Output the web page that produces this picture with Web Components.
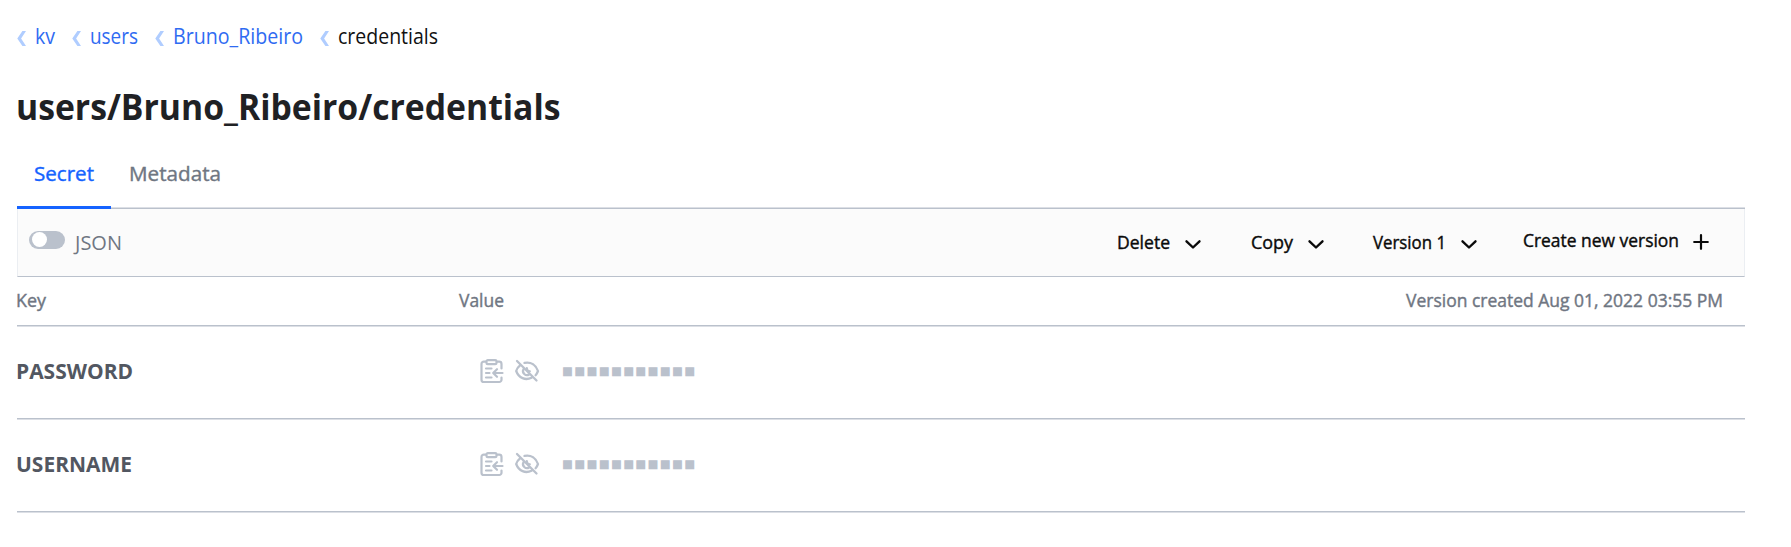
<!DOCTYPE html>
<html lang="en">
<head>
<meta charset="utf-8">
<title>users/Bruno_Ribeiro/credentials</title>
<style>
body{margin:0;background:#fff;font-family:"Open Sans","Noto Sans",sans-serif;overflow:hidden}
</style>
</head>
<body>
<secret-page></secret-page>
<script>
const define=(name,html,ready)=>customElements.define(name,class extends HTMLElement{
  constructor(){super();this.attachShadow({mode:'open'})}
  connectedCallback(){
    this.shadowRoot.innerHTML=html(this);
    if(ready)ready(this);
  }
});

// Label set to a fixed measure: w = width in px, s = font size, b = weight
define('ui-label',el=>`<style>
:host{display:inline-block;flex:none;white-space:nowrap;width:${el.getAttribute('w')}px;font-size:${el.getAttribute('s')}px;font-weight:${el.getAttribute('b')||400};line-height:1.4}
:host([b="500"]){-webkit-text-stroke:.4px currentColor}
span{display:inline-block;transform-origin:0 50%}
</style><span><slot></slot></span>`,el=>{
  const s=el.shadowRoot.querySelector('span');
  const n=s.getBoundingClientRect().width;
  if(n)s.style.transform=`scaleX(${el.getAttribute('w')/n})`;
});

const icons={
  back:['9','15','0 0 9 15','<path d="M5.400 0H9L4.100 7.500 9 15H5.400L.3 7.500z" fill="currentColor"/>'],
  down:['16','9','0 0 16 9','<path d="M1.5 1.3 8 7.5l6.5-6.2" fill="none" stroke="currentColor" stroke-width="2.4" stroke-linecap="round" stroke-linejoin="round"/>'],
  plus:['16','16','0 0 16 16','<path d="M8 1.2v13.6M1.2 8h13.6" fill="none" stroke="currentColor" stroke-width="2.200" stroke-linecap="round"/>'],
  clip:['24','24','0 0 24 24','<g fill="none" stroke="currentColor" stroke-width="2.200" stroke-linecap="round" stroke-linejoin="round"><path d="M6 2.6H3.8A2.3 2.3 0 0 0 1.5 4.9v15.8A2.3 2.3 0 0 0 3.8 23h15.4a2.3 2.3 0 0 0 2.3-2.3v-2.2M17 2.6h2.2a2.3 2.3 0 0 1 2.3 2.3v4.6"/><rect x="6.5" y="1.200" width="10" height="4" rx="1.3"/><path d="M6 9.5h5.5M6 14h3.5M6 18.5h5.5M22.5 14h-9M17 10.2 13.2 14l3.8 3.8"/></g>'],
  eye:['24','22','0 0 24 22','<g fill="none" stroke="currentColor" stroke-width="2.300" stroke-linecap="round" stroke-linejoin="round"><path d="M2 1 21.500 20.500M9.500 2.900C16 1.500 21 5 23 11c-.6 1.700-1.300 3-2.400 4.200M4.800 5.600C3 7 1.700 9 1.200 11c2.500 7 9.300 9.800 15.300 6.700"/><path d="M8.500 9.200a4 4 0 0 0 5.600 5.300M11.800 8.200c0 2 .9 3 3 3.100"/></g>']
};
define('ui-icon',el=>{
  const [w,h,v,p]=icons[el.getAttribute('name')];
  return `<style>:host{display:block;flex:none;width:${w}px;height:${h}px}svg{display:block;overflow:visible}</style><svg width="${w}" height="${h}" viewBox="${v}">${p}</svg>`;
});

define('crumb-item',()=>`<style>
:host{display:flex;align-items:center;color:#2f6bf2}
:host([current]){color:#111}
ui-icon{color:#b0cdff;margin:4px 9px 0 0}
</style><ui-icon name="back"></ui-icon><slot></slot>`);

define('crumb-bar',()=>`<style>
:host{display:flex;box-sizing:border-box;height:72px;padding:1px 0 0 17px;align-items:center}
</style><slot></slot>`);

define('tab-item',()=>`<style>
:host{display:flex;box-sizing:border-box;height:69px;padding:0 17px;align-items:center;color:#6f7682;border-bottom:3px solid transparent}
:host([active]){color:#1563ff;border-color:#1563ff}
</style><slot></slot>`);

define('tab-bar',()=>`<style>
:host{display:flex;box-sizing:border-box;height:69px;background:linear-gradient(#dcdfe5,#dcdfe5) 0 67px/100% 1px no-repeat,linear-gradient(#bac1cc,#bac1cc) 0 68px/100% 1px no-repeat}
</style><slot></slot>`);

define('toggle-switch',()=>`<style>
:host{display:flex;align-items:center}
i{display:block;box-sizing:border-box;width:36px;height:18px;border-radius:9px;background:#bac1cc;padding:1px 3px;margin:-5px 9px 0 0}
i::before{content:"";display:block;width:15px;height:15px;border-radius:50%;background:#fff}
</style><i></i><slot></slot>`);

define('tool-action',el=>`<style>
:host{display:flex;align-items:center;color:#0a0a0a}
ui-icon{margin:${el.getAttribute('icon')==='plus'?'-1px 0 0 14px':'3px 0 0 15px'}}
</style><slot></slot><ui-icon name="${el.getAttribute('icon')}"></ui-icon>`);

define('tool-bar',()=>`<style>
:host{display:flex;box-sizing:border-box;height:68px;border:solid #ebeef2;border-width:0 1px 1px;border-bottom-color:#bac1cc;background:#fbfbfb;align-items:center;padding:0 35px 0 11px}
.actions{display:flex;align-items:center;margin-left:auto}
</style><slot></slot><div class="actions"><slot name="actions"></slot></div>`);

define('table-head',()=>`<style>
:host{display:grid;grid-template-columns:442px 1fr auto;align-items:center;box-sizing:border-box;height:49px;padding:0 22px 2px 0;border-bottom:1px solid #bac1cc;box-shadow:0 1px #dcdfe5;color:#6f7682}
</style><slot></slot>`);

define('secret-row',el=>`<style>
:host{display:grid;grid-template-columns:463px 1fr;align-items:center;box-sizing:border-box;height:93px;padding-bottom:2px;border-bottom:1px solid #bac1cc;box-shadow:0 1px #dcdfe5;color:#525761}
.value{display:flex;align-items:center;color:#bac1cc}
.eye{margin:0 23px 0 11px}
.mask{font-family:"DejaVu Sans",sans-serif;letter-spacing:1.3px}
</style><slot></slot><div class="value"><ui-icon name="clip"></ui-icon><ui-icon class="eye" name="eye"></ui-icon><ui-label class="mask" w="134.500" s="11.600">■■■■■■■■■■■</ui-label></div>`);

define('secret-page',()=>`<style>
:host{display:block;height:547px}
h1{display:flex;align-items:center;height:66px;margin:0;padding:2px 0 0 16px;color:#1f2124;font-size:inherit}
main{margin:0 46px 0 17px}
</style>
<crumb-bar>
<crumb-item><ui-label w="20" s="21">kv</ui-label></crumb-item>
<crumb-item style="margin-left:17px"><ui-label w="48" s="21">users</ui-label></crumb-item>
<crumb-item style="margin-left:17px"><ui-label w="130" s="21">Bruno_Ribeiro</ui-label></crumb-item>
<crumb-item current style="margin-left:17px"><ui-label w="100" s="21">credentials</ui-label></crumb-item>
</crumb-bar>
<h1><ui-label w="544.500" s="35.500" b="700">users/Bruno_Ribeiro/credentials</ui-label></h1>
<main>
<tab-bar>
<tab-item active><ui-label w="60" s="20.500" b="500">Secret</ui-label></tab-item>
<tab-item><ui-label w="92" s="20.500" b="500" style="margin-left:1px">Metadata</ui-label></tab-item>
</tab-bar>
<tool-bar>
<toggle-switch><ui-label w="47" s="19.200" style="color:#6f7682;margin:2px 0 0 1px">JSON</ui-label></toggle-switch>
<tool-action slot="actions" icon="down"><ui-label w="53" s="17.800" b="500">Delete</ui-label></tool-action>
<tool-action slot="actions" icon="down" style="margin-left:50px"><ui-label w="42" s="17.800" b="500">Copy</ui-label></tool-action>
<tool-action slot="actions" icon="down" style="margin-left:49px"><ui-label w="73" s="17.800" b="500">Version 1</ui-label></tool-action>
<tool-action slot="actions" icon="plus" style="margin-left:46px"><ui-label w="156" s="17.800" b="500" style="margin-top:-4px">Create new version</ui-label></tool-action>
</tool-bar>
<table-head>
<ui-label w="30" s="17.800" b="500" style="margin-left:-1px">Key</ui-label>
<ui-label w="45" s="17.800" b="500">Value</ui-label>
<ui-label w="317" s="17.800" b="500">Version created Aug 01, 2022 03:55 PM</ui-label>
</table-head>
<secret-row><ui-label w="117" s="20.500" b="700" style="margin-left:-1px">PASSWORD</ui-label></secret-row>
<secret-row><ui-label w="116" s="20.500" b="700" style="margin-left:-1px">USERNAME</ui-label></secret-row>
</main>`);
</script>
</body>
</html>
